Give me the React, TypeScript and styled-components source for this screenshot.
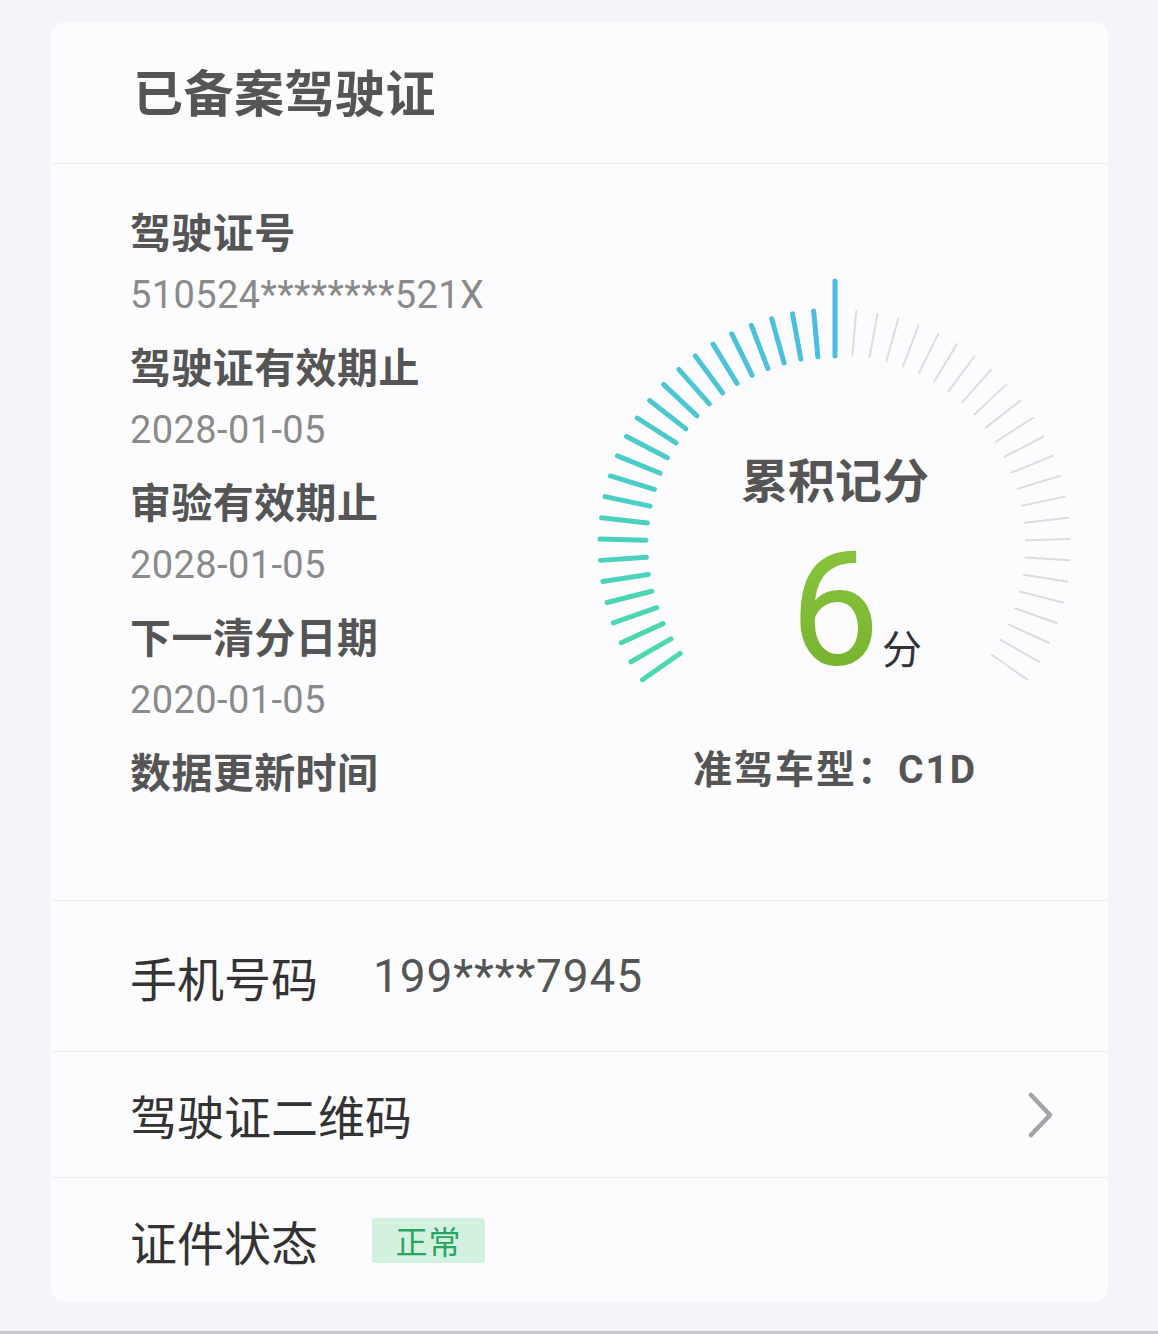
import styled, { createGlobalStyle } from "styled-components";

const GlobalStyle = createGlobalStyle`
  html, body {
    margin: 0;
    padding: 0;
    background: #f4f4fa;
  }
  * {
    box-sizing: border-box;
  }
`;

const CJK = `Roboto, "Noto Sans CJK SC", "Noto Sans", sans-serif`;

const Page = styled.div`
  width: 1158px;
  height: 1334px;
  padding: 22px 50px 0 51px;
  background: #f4f4fa;
  border-bottom: 3px solid #c8c8d0;
  font-family: ${CJK};
`;

const Card = styled.section`
  background: #fcfcfe;
  border-radius: 14px;
  overflow: hidden;
`;

const Header = styled.header`
  height: 142px;
  display: flex;
  align-items: center;
  padding: 0 0 6px 82px;
  border-bottom: 1px solid #ececf1;
`;

const Title = styled.h1`
  margin: 0;
  font-size: 50px;
  font-weight: 700;
  color: #555;
  letter-spacing: 0.5px;
`;

const Info = styled.div`
  height: 737px;
  display: flex;
  padding: 46px 23px 0 79px;
  border-bottom: 1px solid #ececf1;
`;

const Fields = styled.div`
  flex: 1;
  display: flex;
  flex-direction: column;
  gap: 26px;
`;

const Field = styled.div`
  display: flex;
  flex-direction: column;
  gap: 13px;
`;

const Label = styled.div`
  font-size: 41px;
  line-height: 48px;
  font-weight: 700;
  color: #555;
  letter-spacing: 0.4px;
`;

const Value = styled.div`
  font-size: 38px;
  line-height: 48px;
  color: #8a8a8a;
  letter-spacing: 0.4px;
`;

const GaugeColumn = styled.div`
  width: 500px;
  padding-top: 55px;
  display: flex;
  flex-direction: column;
  align-items: center;
`;

const Dial = styled.div`
  display: grid;
  width: 500px;
  height: 440px;
  & > * {
    grid-area: 1 / 1;
  }
`;

const DialText = styled.div`
  display: flex;
  flex-direction: column;
  align-items: center;
  padding-top: 189px;
`;

const DialTitle = styled.div`
  font-size: 47px;
  line-height: 56px;
  font-weight: 700;
  color: #555;
`;

const Score = styled.div`
  margin-top: 20px;
  display: flex;
  align-items: baseline;
`;

const ScoreNumber = styled.span`
  font-family: Roboto, sans-serif;
  font-size: 160px;
  line-height: 160px;
  font-weight: 400;
  background: linear-gradient(180deg, #8cc63f 0%, #74b12c 100%);
  -webkit-background-clip: text;
  background-clip: text;
  color: transparent;
`;

const ScoreUnit = styled.span`
  font-size: 40px;
  color: #333;
  margin-left: 2px;
  margin-right: -42px;
`;

const LicenseClass = styled.div`
  margin-top: 40px;
  font-size: 39px;
  line-height: 50px;
  font-weight: 700;
  color: #555;
  letter-spacing: 2px;
`;

const Row = styled.div<{ $height: number }>`
  height: ${(p) => p.$height}px;
  display: flex;
  align-items: center;
  padding: 0 52px 0 79px;
  border-bottom: 1px solid #ececf1;
  &:last-child {
    border-bottom: none;
  }
`;

const RowLabel = styled.span`
  font-size: 47px;
  color: #333;
  font-weight: 400;
`;

const RowValue = styled.span`
  margin-left: 55px;
  font-family: Roboto, sans-serif;
  font-size: 46px;
  color: #555;
  letter-spacing: 0.9px;
`;

const Spacer = styled.div`
  flex: 1;
`;

const Badge = styled.span`
  margin-left: 54px;
  width: 113px;
  height: 45px;
  display: flex;
  align-items: center;
  justify-content: center;
  background: #d3f1df;
  border-radius: 3px;
  color: #2aa463;
  font-size: 32px;
  letter-spacing: 1px;
`;

const fields = [
  { label: "驾驶证号", value: "510524********521X" },
  { label: "驾驶证有效期止", value: "2028-01-05" },
  { label: "审验有效期止", value: "2028-01-05" },
  { label: "下一清分日期", value: "2020-01-05" },
  { label: "数据更新时间", value: "" },
];

function GaugeTicks() {
  const cx = 250;
  const cy = 280;
  const count = 49;
  const active = 24;
  const ticks = [];
  for (let i = 0; i < count; i++) {
    const deg = -125 + (i * 250) / (count - 1);
    const rad = (deg * Math.PI) / 180;
    const sx = Math.sin(rad);
    const sy = -Math.cos(rad);
    const on = i <= active;
    const rIn = on ? 189 : 191;
    const rOut = i === active ? 264 : 235;
    let color = "#dcdce2";
    if (on) {
      // green-teal at the bottom, blue at the top
      const t = i / active;
      const r = Math.round(0x4c + (0x4a - 0x4c) * t);
      const g = Math.round(0xd9 + (0xbc - 0xd9) * t);
      const b = Math.round(0xae + (0xe6 - 0xae) * t);
      color = `rgb(${r},${g},${b})`;
    }
    ticks.push(
      <line
        key={i}
        x1={cx + sx * rIn}
        y1={cy + sy * rIn}
        x2={cx + sx * rOut}
        y2={cy + sy * rOut}
        stroke={color}
        strokeWidth={on ? 5 : 2}
        strokeLinecap="round"
      />
    );
  }
  return (
    <svg width="500" height="440" viewBox="0 0 500 440">
      {ticks}
    </svg>
  );
}

function Chevron() {
  return (
    <svg width="30" height="48" viewBox="0 0 30 48">
      <path
        d="M5 4 L24 24 L5 44"
        fill="none"
        stroke="#a4a4a8"
        strokeWidth="4.5"
        strokeLinecap="round"
        strokeLinejoin="round"
      />
    </svg>
  );
}

function App() {
  return (
    <Page>
      <GlobalStyle />
      <Card>
        <Header>
          <Title>已备案驾驶证</Title>
        </Header>
        <Info>
          <Fields>
            {fields.map((f) => (
              <Field key={f.label}>
                <Label>{f.label}</Label>
                {f.value && <Value>{f.value}</Value>}
              </Field>
            ))}
          </Fields>
          <GaugeColumn>
            <Dial>
              <GaugeTicks />
              <DialText>
                <DialTitle>累积记分</DialTitle>
                <Score>
                  <ScoreNumber>6</ScoreNumber>
                  <ScoreUnit>分</ScoreUnit>
                </Score>
              </DialText>
            </Dial>
            <LicenseClass>准驾车型：C1D</LicenseClass>
          </GaugeColumn>
        </Info>
        <Row $height={151}>
          <RowLabel>手机号码</RowLabel>
          <RowValue>199****7945</RowValue>
        </Row>
        <Row $height={126}>
          <RowLabel>驾驶证二维码</RowLabel>
          <Spacer />
          <Chevron />
        </Row>
        <Row $height={124}>
          <RowLabel>证件状态</RowLabel>
          <Badge>正常</Badge>
        </Row>
      </Card>
    </Page>
  );
}

export default App;
